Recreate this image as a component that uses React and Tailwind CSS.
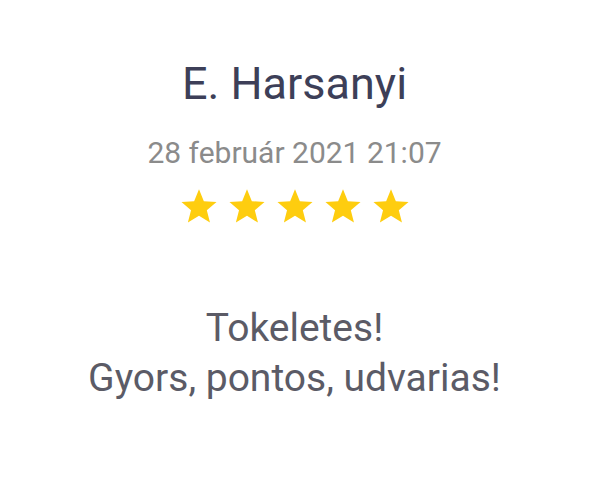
export default function App() {
  const stars = [0, 1, 2, 3, 4];
  return (
    <div className="w-[589px] h-[502px] bg-white flex flex-col items-center font-['Roboto',sans-serif]">
      <h1 className="mt-[58px] text-[45px] leading-[52px] text-[#3d3f58]">E. Harsanyi</h1>
      <div className="mt-[25px] text-[30px] leading-[36px] text-[#8b8b8b]">28 február 2021 21:07</div>
      <div className="mt-[17px] flex gap-[10px]">
        {stars.map((i) => (
          <svg key={i} width="38" height="36" viewBox="0 0 24 23">
            <path d="M12 0.8l3.1 7.6 8.1 0.6-6.2 5.2 2 7.9L12 17.8 4.9 22.1l2-7.9L0.8 9l8.1-0.6z" fill="#fecd0f" />
          </svg>
        ))}
      </div>
      <div className="mt-[79px] text-[39px] leading-[50px] text-[#5b5b66] text-center">
        <div>Tokeletes!</div>
        <div>Gyors, pontos, udvarias!</div>
      </div>
    </div>
  );
}
